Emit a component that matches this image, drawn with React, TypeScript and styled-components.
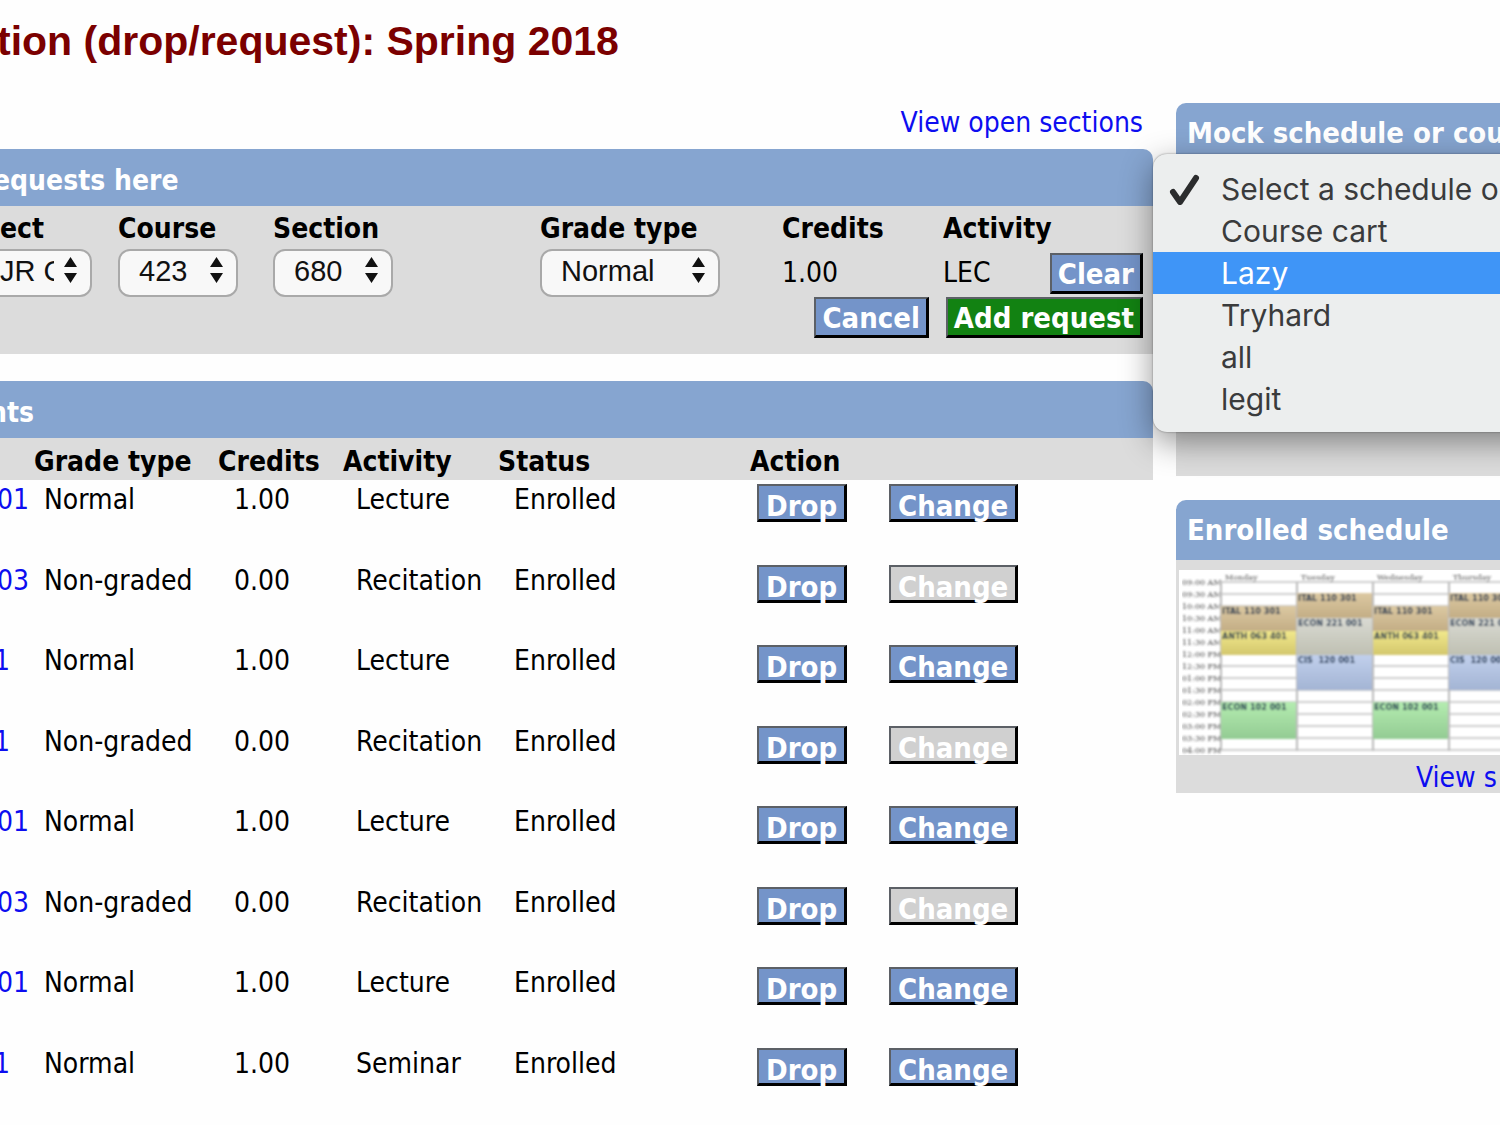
import React, { useId } from "react";
import styled, { createGlobalStyle, css } from "styled-components";

const sans = `"DejaVu Sans Condensed", "DejaVu Sans", sans-serif`;
const arial = `"Liberation Sans", Arial, sans-serif`;
const blue = "#86a5d0";

const Global = createGlobalStyle`
  *, *::before, *::after { box-sizing: border-box; }
  body { margin: 0; background: #fefefe; color: #000; font: 28px/32px ${sans}; overflow-x: hidden; }
`;

const Page = styled.div`
  min-height: 100vh;
  overflow: hidden;
  padding-top: 17px;
`;

const Title = styled.h1`
  margin: 0 0 38px -3px;
  font: bold 41px/48px ${arial};
  color: #7b0000;
  white-space: nowrap;
`;

const Columns = styled.div`
  display: grid;
  grid-template-columns: minmax(0, 1fr) 324px;
  gap: 23px;
  align-items: start;
`;

const Main = styled.main`
  display: flex;
  flex-direction: column;
`;

const Sidebar = styled.aside`
  display: grid;
  gap: 24px;
`;

const Link = styled.a`
  color: #0d0df0;
  text-decoration: none;
  white-space: nowrap;
`;

const LinkBar = styled.div`
  padding: 4px 10px 10px 0;
  text-align: right;
`;

const Panel = styled.section<{ $gap?: number }>`
  position: relative;
  margin-bottom: ${(p) => p.$gap ?? 0}px;
`;

const PanelTitle = styled.h2<{ $indent?: number }>`
  margin: 0;
  height: 57px;
  padding-top: 16px;
  background: ${blue};
  border-radius: 0 10px 0 0;
  color: #fff;
  font-size: 28px;
  line-height: 32px;
  text-indent: ${(p) => p.$indent ?? 0}px;
  white-space: nowrap;
  overflow: hidden;
`;

const SideTitle = styled(PanelTitle)`
  height: 60px;
  padding: 14px 0 0 11px;
  border-radius: 10px 0 0 0;
  font-size: 29px;
`;

const RequestForm = styled.form`
  background: #dcdcdc;
  padding: 7px 10px 16px 0;
`;

const Fields = styled.div`
  display: grid;
  grid-template-columns: 118px 155px 267px 242px 161px 1fr;
`;

const Field = styled.div`
  display: flex;
  flex-direction: column;
  gap: 4px;
`;

const Label = styled.label`
  font-weight: bold;
`;

const Caption = styled.span`
  font-weight: bold;
`;

const Value = styled.div`
  display: flex;
  justify-content: space-between;
  align-items: center;
  height: 48px;
`;

const SelectBox = styled.div<{ $width: number; $bleed: boolean }>`
  position: relative;
  width: ${(p) => p.$width}px;
  margin-left: ${(p) => (p.$bleed ? -14 : 0)}px;
`;

const Select = styled.select<{ $pad: number }>`
  appearance: none;
  display: block;
  width: 100%;
  height: 48px;
  padding: 0 36px 5px ${(p) => p.$pad}px;
  border: 2px solid #a9a9a9;
  border-radius: 12px;
  background: #f8f8f8;
  color: #111;
  font: 29px/32px ${arial};
`;

const Arrows = styled.svg`
  position: absolute;
  right: 15px;
  top: 8px;
  pointer-events: none;
`;

const Button = styled.button<{ $tone?: "green"; $size?: "small" }>`
  height: 41px;
  padding: 2px 6px 0;
  border: solid;
  border-width: 2px 3px 3px 2px;
  border-color: #5c6066 #000 #000 #5c6066;
  background: ${(p) => (p.$tone ? "#128212" : "#7494c9")};
  color: #fff;
  font: bold 29px/32px ${sans};
  white-space: nowrap;
  ${(p) =>
    p.$size &&
    css`
      height: 38px;
      padding: 4px 7px 0;
    `}
  &:disabled {
    background: #d0d0d0;
  }
`;

const Actions = styled.div`
  display: flex;
  justify-content: flex-end;
  gap: 17px;
`;

const Table = styled.table`
  width: 100%;
  table-layout: fixed;
  border-collapse: collapse;
`;

const Th = styled.th`
  height: 42px;
  padding: 6px 0 0;
  background: #dcdcdc;
  text-align: left;
  white-space: nowrap;
`;

const Row = styled.tr`
  height: 81px;
  &:nth-child(even) {
    height: 80px;
  }
`;

const Td = styled.td<{ $pad?: number }>`
  padding: 4px 0 0 ${(p) => p.$pad ?? 0}px;
  vertical-align: top;
  white-space: nowrap;
`;

const SectionLink = styled(Link)<{ $short: boolean }>`
  display: block;
  margin-left: ${(p) => (p.$short ? -6 : -3)}px;
`;

const SideBody = styled.div<{ $min?: number }>`
  min-height: ${(p) => p.$min ?? 0}px;
  background: #dcdcdc;
  overflow: hidden;
`;

const Menu = styled.ul`
  position: absolute;
  left: -23px;
  right: -40px;
  top: 51px;
  z-index: 2;
  margin: 0;
  padding: 14px 0 12px;
  list-style: none;
  border-radius: 14px;
  background: #eceeee;
  box-shadow: 0 0 2px rgba(0, 0, 0, 0.45), 0 10px 32px rgba(0, 0, 0, 0.42);
`;

const Option = styled.li<{ $active?: boolean }>`
  display: grid;
  grid-template-columns: 52px 1fr;
  align-items: center;
  height: 42px;
  padding-left: 16px;
  background: ${(p) => (p.$active ? "#3f95f7" : "transparent")};
  color: ${(p) => (p.$active ? "#fff" : "#3a3b3c")};
  font: 30px/32px Inter, sans-serif;
  white-space: nowrap;
`;

const Thumb = styled.svg`
  display: block;
  margin: 10px 0 0 3px;
`;

const ViewLink = styled(Link)`
  display: block;
  padding: 7px 0 0 240px;
  height: 38px;
`;

type StepperProps = { label: string; value: string; width: number; pad?: number; bleed?: boolean };

function Stepper({ label, value, width, pad = 19, bleed = false }: StepperProps) {
  const id = useId();
  return (
    <Field>
      <Label htmlFor={id}>{label}</Label>
      <SelectBox $width={width} $bleed={bleed}>
        <Select id={id} $pad={pad} defaultValue={value}>
          <option>{value}</option>
        </Select>
        <Arrows width="13" height="26" viewBox="0 0 13 26" aria-hidden="true">
          <path d="M6.500 0L13 10H0zM6.500 26L13 16H0z" fill="#111" />
        </Arrows>
      </SelectBox>
    </Field>
  );
}

const rows = [
  ["01", "Normal", "1.00", "Lecture"],
  ["03", "Non-graded", "0.00", "Recitation"],
  ["1", "Normal", "1.00", "Lecture"],
  ["1", "Non-graded", "0.00", "Recitation"],
  ["01", "Normal", "1.00", "Lecture"],
  ["03", "Non-graded", "0.00", "Recitation"],
  ["01", "Normal", "1.00", "Lecture"],
  ["1", "Normal", "1.00", "Seminar"],
];

const lists = ["Select a schedule or", "Course cart", "Lazy", "Tryhard", "all", "legit"];

const times = ["09:00 AM", "09:30 AM", "10:00 AM", "10:30 AM", "11:00 AM", "11:30 AM", "12:00 PM", "12:30 PM", "01:00 PM", "01:30 PM", "02:00 PM", "02:30 PM", "03:00 PM", "03:30 PM", "04:00 PM"];
const days = ["Monday", "Tuesday", "Wednesday", "Thursday"];
const even = [
  { y: 36, h: 25, fill: "url(#tan)", name: "ITAL 110 301" },
  { y: 61, h: 24, fill: "url(#yellow)", name: "ANTH 063 401" },
  { y: 132, h: 37, fill: "url(#green)", name: "ECON 102 001" },
];
const odd = [
  { y: 23, h: 25, fill: "url(#tan)", name: "ITAL 110 301" },
  { y: 48, h: 37, fill: "url(#gray)", name: "ECON 221 001" },
  { y: 85, h: 35, fill: "url(#sky)", name: "CIS\u00a0 120 001" },
];
const tints = [
  ["tan", "#dcc9a2", "#c3ad85"],
  ["yellow", "#f1e88c", "#d3c76c"],
  ["green", "#b4ecb0", "#93cb93"],
  ["gray", "#d9dad3", "#bfc0b2"],
  ["sky", "#c1d0ec", "#a3b4d4"],
];

function ScheduleThumb() {
  return (
    <Thumb width="380" height="185" viewBox="0 0 380 185" role="img" aria-label="Enrolled schedule">
      <defs>
        {tints.map(([id, a, b]) => (
          <linearGradient key={id} id={id} x1="0" y1="0" x2="0" y2="1">
            <stop offset="0" stopColor={a} />
            <stop offset="1" stopColor={b} />
          </linearGradient>
        ))}
        <filter id="soft" x="0" y="0" width="1" height="1">
          <feGaussianBlur stdDeviation="0.8" />
        </filter>
      </defs>
      <rect width="380" height="185" fill="#fff" />
      <g filter="url(#soft)">
        {times.map((t, i) => (
          <React.Fragment key={t}>
            <path d={`M42 ${12 + i * 12}H380`} stroke="#cfcfcf" strokeWidth="2" />
            <text x="3" y={15 + i * 12} fontSize="8" fontFamily="DejaVu Serif, serif" fill="#444">
              {t}
            </text>
          </React.Fragment>
        ))}
        {days.map((d, i) => (
          <React.Fragment key={d}>
            <path d={`M${42 + i * 76} 12V181`} stroke="#bbb" strokeWidth="2" />
            <text x={46 + i * 76} y="10" fontSize="8" fontFamily="DejaVu Serif, serif" fill="#555">
              {d}
            </text>
            {(i % 2 ? odd : even).map((c) => (
              <React.Fragment key={c.name}>
                <rect x={42 + i * 76} y={c.y} width="76" height={c.h} fill={c.fill} />
                <text x={43 + i * 76} y={c.y + 8} fontSize="9" fontWeight="bold" fontFamily="DejaVu Sans Condensed, sans-serif" fill="#16304f">
                  {c.name}
                </text>
              </React.Fragment>
            ))}
          </React.Fragment>
        ))}
      </g>
    </Thumb>
  );
}

export default function App() {
  return (
    <Page>
      <Global />
      <Title>tion (drop/request): Spring 2018</Title>
      <Columns>
        <Main>
          <LinkBar>
            <Link href="#open">View open sections</Link>
          </LinkBar>
          <Panel $gap={27}>
            <PanelTitle $indent={-7}>equests here</PanelTitle>
            <RequestForm onSubmit={(e) => e.preventDefault()}>
              <Fields>
                <Stepper label="ect" value="JR C" width={106} pad={12} bleed />
                <Stepper label="Course" value="423" width={120} />
                <Stepper label="Section" value="680" width={120} />
                <Stepper label="Grade type" value="Normal" width={180} />
                <Field>
                  <Caption>Credits</Caption>
                  <Value>1.00</Value>
                </Field>
                <Field>
                  <Caption>Activity</Caption>
                  <Value>
                    LEC <Button type="reset">Clear</Button>
                  </Value>
                </Field>
              </Fields>
              <Actions>
                <Button type="button">Cancel</Button>
                <Button type="submit" $tone="green">
                  Add request
                </Button>
              </Actions>
            </RequestForm>
          </Panel>
          <Panel>
            <PanelTitle $indent={-11}>nts</PanelTitle>
            <Table>
              <colgroup>
                {[34, 184, 125, 155, 252, 132].map((w) => (
                  <col key={w} width={w} />
                ))}
                <col />
              </colgroup>
              <thead>
                <tr>
                  <Th />
                  <Th scope="col">Grade type</Th>
                  <Th scope="col">Credits</Th>
                  <Th scope="col">Activity</Th>
                  <Th scope="col">Status</Th>
                  <Th scope="col" colSpan={2}>
                    Action
                  </Th>
                </tr>
              </thead>
              <tbody>
                {rows.map(([section, grade, credits, activity], i) => (
                  <Row key={i}>
                    <Td>
                      <SectionLink href="#section" $short={section.length === 1}>
                        {section}
                      </SectionLink>
                    </Td>
                    <Td $pad={10}>{grade}</Td>
                    <Td $pad={16}>{credits}</Td>
                    <Td $pad={13}>{activity}</Td>
                    <Td $pad={16}>Enrolled</Td>
                    <Td $pad={7}>
                      <Button $size="small">Drop</Button>
                    </Td>
                    <Td $pad={7}>
                      <Button $size="small" disabled={grade === "Non-graded"}>
                        Change
                      </Button>
                    </Td>
                  </Row>
                ))}
              </tbody>
            </Table>
          </Panel>
        </Main>
        <Sidebar>
          <Panel>
            <SideTitle>Mock schedule or cou</SideTitle>
            <SideBody $min={313} />
            <Menu role="listbox" aria-label="Select a schedule">
              {lists.map((name, i) => (
                <Option key={name} role="option" aria-selected={i === 0} $active={i === 2}>
                  {i === 0 ? (
                    <svg width="32" height="32" viewBox="0 0 32 32" aria-hidden="true">
                      <path d="M4 19L11 29L27 5" fill="none" stroke="#2b2c2d" strokeWidth="6" strokeLinecap="round" strokeLinejoin="round" />
                    </svg>
                  ) : (
                    <span />
                  )}
                  {name}
                </Option>
              ))}
            </Menu>
          </Panel>
          <Panel>
            <SideTitle>Enrolled schedule</SideTitle>
            <SideBody>
              <ScheduleThumb />
              <ViewLink href="#schedule">View s</ViewLink>
            </SideBody>
          </Panel>
        </Sidebar>
      </Columns>
    </Page>
  );
}
